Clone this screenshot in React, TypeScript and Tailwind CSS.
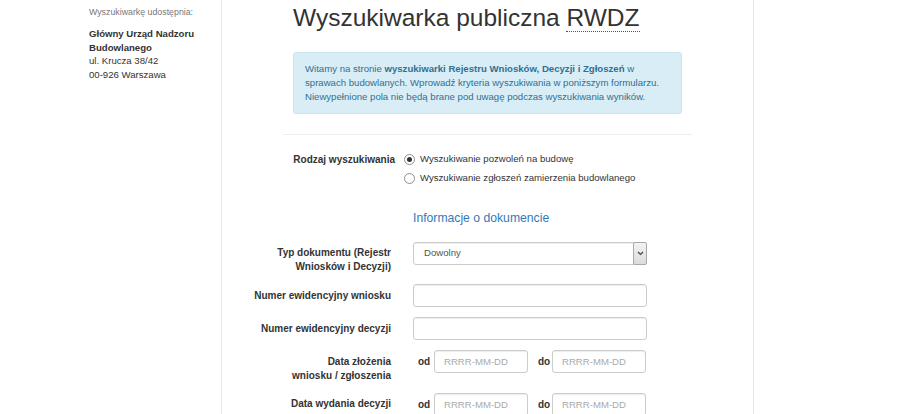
import React from 'react';

const labelCls =
  'w-[169px] shrink-0 text-right font-bold text-[10px] leading-[14px] pt-[4.5px] text-[#333]';
const inputCls =
  'h-[23px] border border-[#ccc] rounded-[3px] bg-white px-[9px] text-[9.6px] text-[#555] placeholder:text-[#aaa] shadow-[inset_0_1px_1px_rgba(0,0,0,0.075)] outline-none';

const Radio: React.FC<{ checked?: boolean; label: string }> = ({ checked, label }) => (
  <div className="flex h-[19px] items-center">
    <span className="flex h-[11px] w-[11px] items-center justify-center rounded-full border border-[#8f8f8f] bg-white">
      {checked && <span className="h-[5px] w-[5px] rounded-full bg-[#333]" />}
    </span>
    <span className="ml-[5px] text-[9.6px] text-[#333]">{label}</span>
  </div>
);

const DateRange: React.FC = () => (
  <div className="ml-[22px] flex items-center">
    <span className="w-[21px] pl-[5px] text-[10px] font-bold">od</span>
    <input type="text" placeholder="RRRR-MM-DD" className={`${inputCls} w-[94px]`} />
    <span className="w-[24px] pl-[10px] text-[10px] font-bold">do</span>
    <input type="text" placeholder="RRRR-MM-DD" className={`${inputCls} w-[94px]`} />
  </div>
);

export default function App() {
  return (
    <div className="flex min-h-[414px] bg-white font-['Liberation_Sans',Arial,sans-serif] text-[#333]">
      {/* Sidebar */}
      <aside className="w-[222px] shrink-0 border-r border-[#e6e6e6] pl-[89px] pt-[5px]">
        <p className="text-[8.8px] leading-[14px] text-[#777]">Wyszukiwarkę udostępnia:</p>
        <div className="mt-[8px] text-[9.6px] leading-[13.5px]">
          <div className="font-bold">
            Główny Urząd Nadzoru
            <br />
            Budowlanego
          </div>
          <div>ul. Krucza 38/42</div>
          <div>00-926 Warszawa</div>
        </div>
      </aside>

      {/* Main */}
      <main className="w-[532px] shrink-0 border-r border-[#e6e6e6]">
        <h1 className="ml-[71px] mt-[4px] text-[24.5px] leading-[27px] font-normal text-[#333]">
          Wyszukiwarka publiczna{' '}
          <abbr
            title="Rejestr Wniosków, Decyzji i Zgłoszeń"
            className="no-underline border-b border-dotted border-[#555]"
          >
            RWDZ
          </abbr>
        </h1>

        <div className="ml-[71px] mt-[21px] w-[389px] rounded-[3px] border border-[#c6e7f2] bg-[#d9edf7] px-[11px] py-[9px] text-[9.6px] leading-[14px] text-[#31708f]">
          Witamy na stronie <b>wyszukiwarki Rejestru Wniosków, Decyzji i Zgłoszeń</b> w
          <br />
          sprawach budowlanych. Wprowadź kryteria wyszukiwania w poniższym formularzu.
          <br />
          Niewypełnione pola nie będą brane pod uwagę podczas wyszukiwania wyników.
        </div>

        <hr className="ml-[61px] mt-[20px] w-[409px] border-t border-[#eee]" />

        {/* Search type */}
        <div className="mt-[15px] flex">
          <div className="w-[173px] shrink-0 text-right text-[10px] font-bold leading-[19px]">
            Rodzaj wyszukiwania
          </div>
          <div className="ml-[9px]">
            <Radio checked label="Wyszukiwanie pozwoleń na budowę" />
            <Radio label="Wyszukiwanie zgłoszeń zamierzenia budowlanego" />
          </div>
        </div>

        <h4 className="ml-[191px] mt-[21.5px] text-[12.2px] leading-[16px] text-[#337ab7]">
          Informacje o dokumencie
        </h4>

        <div className="mt-[16px] flex flex-col gap-[10px]">
          {/* Document type */}
          <div className="flex items-start">
            <label className={labelCls}>
              Typ dokumentu (Rejestr
              <br />
              Wniosków i Decyzji)
            </label>
            <div className="ml-[22px] flex h-[23px] w-[234px] items-stretch rounded-[3px] border border-[#ccc] bg-white shadow-[inset_0_1px_1px_rgba(0,0,0,0.075)]">
              <span className="flex flex-1 items-center pl-[10px] text-[9.6px] text-[#555]">Dowolny</span>
              <span className="my-[-1px] mr-[-1px] flex w-[14px] items-center justify-center rounded-[2px] border border-[#a9a9a9] bg-gradient-to-b from-[#f2f2f2] to-[#dcdcdc]">
                <svg width="7" height="5" viewBox="0 0 7 5">
                  <path d="M1 1l2.5 2.5L6 1" fill="none" stroke="#444" strokeWidth="1.2" />
                </svg>
              </span>
            </div>
          </div>

          <div className="flex items-start">
            <label className={labelCls}>Numer ewidencyjny wniosku</label>
            <input type="text" className={`${inputCls} ml-[22px] w-[234px]`} />
          </div>

          <div className="flex items-start">
            <label className={labelCls}>Numer ewidencyjny decyzji</label>
            <input type="text" className={`${inputCls} ml-[22px] w-[234px]`} />
          </div>

          <div className="flex items-start">
            <label className={labelCls}>
              Data złożenia
              <br />
              wniosku / zgłoszenia
            </label>
            <DateRange />
          </div>

          <div className="flex items-start">
            <label className={labelCls}>Data wydania decyzji</label>
            <DateRange />
          </div>
        </div>
      </main>
    </div>
  );
}
